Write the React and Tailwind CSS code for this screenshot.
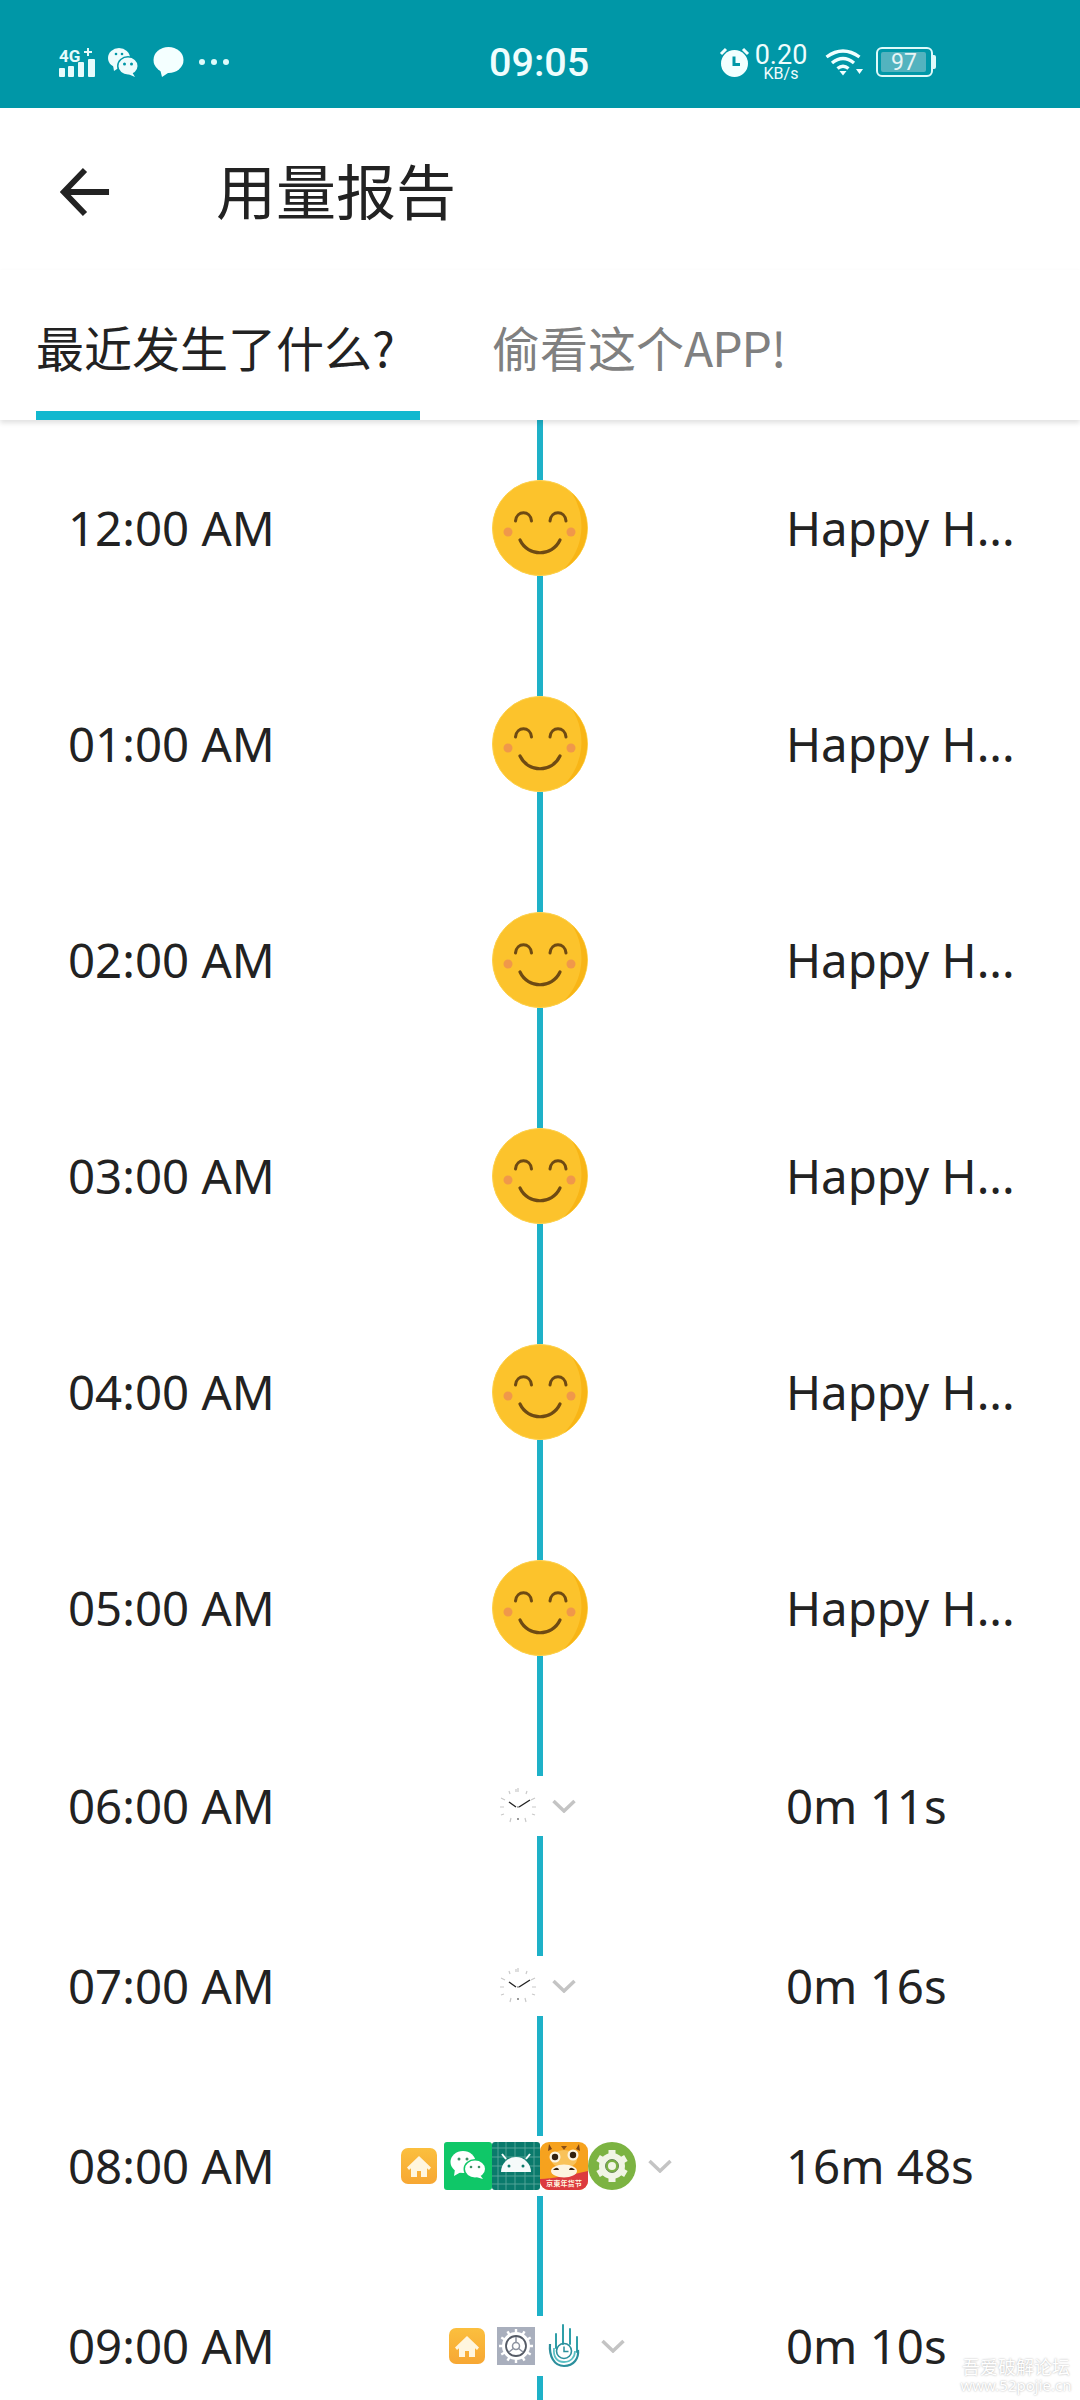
const cjk = { fontFamily: '"Noto Sans CJK SC", sans-serif' };
const noto = { fontFamily: '"Noto Sans", sans-serif' };

function Signal() {
  return (
    <svg width="37" height="30" viewBox="0 0 37 30" fill="#e6fbfb">
      <text x="0" y="15" fontSize="17" fontWeight="700" fontFamily="Roboto, sans-serif">4G</text>
      <path d="M28 1h2v3h3v2h-3v3h-2V6h-3V4h3z" />
      <rect x="0" y="21" width="6" height="9" rx="1" />
      <rect x="9" y="19" width="6" height="11" rx="1" />
      <rect x="19" y="15" width="6" height="15" rx="1" />
      <rect x="29" y="12" width="7" height="18" rx="1" />
    </svg>
  );
}
function WeChatStatus() {
  return (
    <svg width="31" height="30" viewBox="0 0 31 30">
      <ellipse cx="11" cy="11" rx="11" ry="10" fill="#eefcfc" />
      <path d="M5 18l1 6 6-4z" fill="#eefcfc" />
      <ellipse cx="20" cy="19" rx="11" ry="10" fill="#0097a7" />
      <ellipse cx="20" cy="19" rx="9.5" ry="8.5" fill="#eefcfc" />
      <path d="M24 25l3 5-7-3z" fill="#eefcfc" />
      <circle cx="8" cy="7" r="1.3" fill="#0097a7" /><circle cx="14" cy="7" r="1.3" fill="#0097a7" />
      <circle cx="16.5" cy="17" r="1.5" fill="#0097a7" /><circle cx="23.5" cy="17" r="1.5" fill="#0097a7" />
    </svg>
  );
}
function Bubble() {
  return (
    <svg width="31" height="30" viewBox="0 0 31 30" fill="#f4ffff">
      <ellipse cx="15.5" cy="13" rx="15" ry="13" />
      <path d="M7 22l2 8 9-6z" />
    </svg>
  );
}
function Alarm() {
  return (
    <svg width="31" height="30" viewBox="0 0 31 30">
      <circle cx="15.5" cy="16.5" r="13.5" fill="#f2ffff" />
      <path d="M2 7l5-5M29 7l-5-5" stroke="#f2ffff" strokeWidth="3" fill="none" />
      <path d="M15 9.5v8h6" stroke="#0097a7" strokeWidth="3" fill="none" />
    </svg>
  );
}
function Wifi() {
  return (
    <svg width="38" height="28" viewBox="0 0 38 28" fill="none" stroke="#f0ffff" strokeWidth="3.4">
      <path d="M1.5 9Q18 -3 34.5 9" />
      <path d="M7 15Q18 6 29 15" />
      <path d="M12.5 20.5Q18 16 23.5 20.5" />
      <path d="M14.5 23l3.5 4.5 3.5-4.5z" fill="#f0ffff" stroke="none" />
      <path d="M31 21h7l-3.500 5z" fill="#f0ffff" stroke="none" />
    </svg>
  );
}
function Battery() {
  return (
    <div className="flex items-center">
      <div className="flex h-[30px] w-[57px] items-center rounded-[6px] border-2 border-[#dffafa] p-[3px]">
        <div className="flex h-full w-[45px] items-center justify-center rounded-[2px] bg-[#53b3bf] pl-[1px] text-[23px] leading-none text-[#e8f5f5]" style={{ fontFamily: 'Roboto, sans-serif' }}>97</div>
      </div>
      <div className="h-[14px] w-[3px] rounded-r-[2px] bg-[#dffafa]" />
    </div>
  );
}

function StatusBar() {
  return (
    <div className="flex h-[108px] items-center bg-[#0097a7] pt-[16px] text-[#effdfd]" style={{ fontFamily: 'Roboto, sans-serif' }}>
      <div className="flex w-[489px] items-center pl-[59px]">
        <Signal />
        <div className="ml-[12px]"><WeChatStatus /></div>
        <div className="ml-[14px]"><Bubble /></div>
        <div className="ml-[15px] flex gap-[6px]">
          <span className="h-[6px] w-[6px] rounded-full bg-[#dffafa]" />
          <span className="h-[6px] w-[6px] rounded-full bg-[#dffafa]" />
          <span className="h-[6px] w-[6px] rounded-full bg-[#dffafa]" />
        </div>
      </div>
      <div className="w-[230px] pt-[2px] text-[39.500px] leading-none font-medium">09:05</div>
      <Alarm />
      <div className="ml-[4px] flex w-[54px] flex-col items-center leading-none">
        <span className="text-[27px] leading-[20px]">0.20</span>
        <span className="mt-[3px] text-[16px] leading-[12px]">KB/s</span>
      </div>
      <div className="ml-[17px]"><Wifi /></div>
      <div className="ml-[13px]"><Battery /></div>
    </div>
  );
}

function Header() {
  return (
    <div className="flex h-[162px] items-center pt-[6px]">
      <svg className="ml-[60px]" width="50" height="50" viewBox="0 0 52 50" fill="none" stroke="#222222" strokeWidth="6">
        <path d="M26 2L4 25l22 23" />
        <path d="M5 25h46" />
      </svg>
      <div className="ml-[106px] pb-[6px] text-[60px] leading-none text-[#222222]" style={cjk}>用量报告</div>
    </div>
  );
}

function Tabs() {
  return (
    <div className="relative z-20 h-[150px] bg-white shadow-[0_3px_5px_rgba(0,0,0,0.12)]">
      <div className="flex h-[141px] items-center pb-[2px] pt-[12px] text-[48px] leading-none" style={cjk}>
        <div className="ml-[36px] w-[384px] text-[#222222]">最近发生了什么?</div>
        <div className="ml-[72px] text-[#808080]">偷看这个<span className="tracking-[-1px]">APP!</span></div>
      </div>
      <div className="ml-[36px] h-[9px] w-[384px] bg-[#12b8cf]" />
    </div>
  );
}

function Smiley() {
  return (
    <svg width="96" height="96" viewBox="0 0 96 96">
      <circle cx="48" cy="48" r="47.500" fill="#fcc32c" stroke="#fdd04a" strokeWidth="1" />
      <path d="M80 13A48 48 0 0 1 72 89A62 62 0 0 0 80 13z" fill="#f8b516" />
      <circle cx="16" cy="52" r="4.500" fill="#f0984a" />
      <circle cx="79" cy="52" r="4.500" fill="#f0984a" />
      <g fill="none" stroke="#6e4a13" strokeLinecap="round">
        <path d="M23.500 41c1-11 15-11 16 0" strokeWidth="3" />
        <path d="M58 41c1-11 15-11 16 0" strokeWidth="3" />
        <path d="M28 60c8 17 32 17 40 0" strokeWidth="3.200" />
      </g>
    </svg>
  );
}

function Clock() {
  return (
    <svg width="40" height="40" viewBox="0 0 40 40">
      <circle cx="20" cy="20" r="20" fill="#ffffff" />
      <g stroke="#c9c9c9" strokeWidth="1.200">
        <path d="M20 2v4M18 6v-3M2 21h4M34 21h4M11 5l1 3M29 5l-1 3M3 12l4 2M37 12l-4 2M3 29l3-1M37 29l-3-1M12 36l1-4M28 36l-1-4" />
      </g>
      <path d="M18 21l-7-5" stroke="#222222" strokeWidth="1.400" />
      <path d="M21 21l11-7" stroke="#222222" strokeWidth="1.400" />
      <circle cx="20" cy="33" r="1" fill="#777777" />
      <circle cx="20" cy="21" r="1" fill="#999999" />
    </svg>
  );
}

function HomeIcon() {
  return (
    <svg width="36" height="36" viewBox="0 0 36 36">
      <defs>
        <linearGradient id="homeg" x1="0" y1="0" x2="0" y2="1">
          <stop offset="0" stopColor="#fbbf3e" />
          <stop offset="1" stopColor="#f7a733" />
        </linearGradient>
      </defs>
      <rect width="36" height="36" rx="7" fill="url(#homeg)" />
      <path d="M18 8L6 19.500l2 2.500 2-1.800V29h6v-6h4v6h6v-8.800l2 1.800 2-2.500z" fill="#fff6df" />
    </svg>
  );
}

function WeChatApp() {
  return (
    <svg width="48" height="48" viewBox="0 0 48 48">
      <rect width="48" height="48" rx="3" fill="#0fc768" />
      <ellipse cx="19" cy="20" rx="12.500" ry="11" fill="#ffffff" />
      <path d="M11 27l-1 7 7-4z" fill="#ffffff" />
      <ellipse cx="31" cy="27" rx="11.500" ry="10" fill="#0fc768" />
      <ellipse cx="31" cy="27" rx="10" ry="8.500" fill="#ffffff" />
      <path d="M36 33l3 4-7-2z" fill="#ffffff" />
      <circle cx="15" cy="17" r="1.500" fill="#3e8f65" />
      <circle cx="23" cy="17" r="1.500" fill="#3e8f65" />
      <circle cx="27" cy="25" r="1.300" fill="#3e8f65" />
      <circle cx="35" cy="25" r="1.300" fill="#3e8f65" />
    </svg>
  );
}

function AndroidApp() {
  return (
    <svg width="48" height="48" viewBox="0 0 48 48">
      <rect width="48" height="48" rx="3" fill="#0a7a6c" />
      <path d="M6 0v48M14 0v48M23 0v48M33 0v48M42 0v48M0 6h48M0 15h48M0 24h48M0 34h48M0 42h48" stroke="#5aa79c" strokeWidth="0.900" />
      <path d="M9 30a15 15 0 0 1 30 0z" fill="#f5fafa" />
      <path d="M14 17l-4-5M34 17l4-5" stroke="#f5fafa" strokeWidth="2" />
      <circle cx="17" cy="24" r="1.500" fill="#0a7a6c" />
      <circle cx="31" cy="24" r="1.500" fill="#0a7a6c" />
    </svg>
  );
}

function TigerApp() {
  return (
    <svg width="48" height="48" viewBox="0 0 48 48">
      <rect width="48" height="48" rx="9" fill="#f6a21e" />
      <path d="M0 37C12 37 30 33 48 29v10a9 9 0 0 1-9 9H9a9 9 0 0 1-9-9z" fill="#dc3b3f" />
      <path d="M9 2l3 5-4 2zM39 2l-3 5 4 2z" fill="#7c4415" />
      <path d="M21 4l3 4 3-4z" fill="#8a5016" />
      <ellipse cx="24" cy="17" rx="13" ry="9" fill="#f9c25a" />
      <circle cx="15" cy="15" r="5.500" fill="#fdf4e0" />
      <circle cx="33" cy="13" r="5.500" fill="#fdf4e0" />
      <circle cx="15" cy="15" r="3.200" fill="#33210f" />
      <circle cx="33" cy="13" r="3.200" fill="#33210f" />
      <ellipse cx="24" cy="29" rx="13" ry="6.500" fill="#fdf4e0" />
      <path d="M13 28c3-3 5-3 6 0M29 28c1-3 3-3 6 0" fill="#33210f" />
      <text x="24" y="44" fontSize="7.200" fill="#fff6e0" textAnchor="middle" fontWeight="700" fontFamily="'Noto Sans CJK SC', sans-serif">京東年货节</text>
    </svg>
  );
}

function GearApp() {
  return (
    <svg width="48" height="48" viewBox="0 0 48 48">
      <circle cx="24" cy="24" r="24" fill="#7cb342" />
      <g fill="#f1f5e5">
        <circle cx="24" cy="24" r="13" />
        <g stroke="#f1f5e5" strokeWidth="7">
          <path d="M24 8v32M10.100 16l27.800 16M10.100 32l27.800-16" />
        </g>
      </g>
      <circle cx="24" cy="24" r="6.500" fill="#7cb342" stroke="#6a8a58" strokeWidth="1" />
      <circle cx="24" cy="24" r="4" fill="#f1f5e5" />
    </svg>
  );
}

function SettingsApp() {
  const teeth = [0, 30, 60, 90, 120, 150];
  return (
    <svg width="38" height="38" viewBox="0 0 38 38">
      <rect width="38" height="38" fill="#a9afbd" />
      <circle cx="19" cy="19" r="14" fill="#ffffff" />
      <g stroke="#ffffff" strokeWidth="2.400">
        {teeth.map((a) => (
          <path key={a} d="M19 2v34" transform={`rotate(${a} 19 19)`} />
        ))}
      </g>
      <circle cx="19" cy="19" r="10" fill="#ffffff" stroke="#555b66" strokeWidth="1.800" />
      <path d="M19 10v5M12 25l5-4M26 25l-5-4" stroke="#8d93a0" strokeWidth="1.500" />
      <circle cx="19" cy="19" r="3.500" fill="none" stroke="#8d93a0" strokeWidth="1.500" />
    </svg>
  );
}

function HandApp() {
  return (
    <svg width="32" height="44" viewBox="0 0 32 44" fill="none" stroke="#2f9fa8" strokeWidth="2">
      <path d="M8 24V10M15 20V1M22 20V5M29 28V13" strokeLinecap="round" />
      <path d="M2 20c-1 12 4 22 14 22s15-8 14-16" stroke="#2b8f9c" strokeWidth="2.200" />
      <path d="M6 24c-1 9 3 14 10 14s11-5 11-11" stroke="#5cc0c4" strokeWidth="1.800" />
      <circle cx="16" cy="27" r="7.500" stroke="#2b8f9c" strokeWidth="1.600" />
      <path d="M16 22.500V27.500h4.500" stroke="#2b8f9c" strokeWidth="1.500" />
    </svg>
  );
}

function Chevron({ cls }) {
  return (
    <svg className={cls} width="24" height="14" viewBox="0 0 24 14" fill="none" stroke="#c4c4c4" strokeWidth="3.500">
      <path d="M1.500 2L12 12 22.500 2" />
    </svg>
  );
}

function Row({ time, right, tall, children }) {
  return (
    <div className={`grid grid-cols-[293px_1fr_293px] items-center text-[47.4px] leading-none text-[#222222] ${tall ? 'h-[216px]' : 'h-[180px]'}`} style={noto}>
      <div className="pl-[68px]">{time}</div>
      <div className="flex justify-center">{children}</div>
      <div className="-ml-[1px] whitespace-nowrap">{right}</div>
    </div>
  );
}

function AppGroup({ children, chevronGap, pad }) {
  return (
    <div className={`relative z-10 flex h-[60px] items-center bg-white ${pad}`}>
      {children}
      <Chevron cls={chevronGap} />
    </div>
  );
}

const happyRows = ['12:00 AM', '01:00 AM', '02:00 AM', '03:00 AM', '04:00 AM', '05:00 AM'];

export default function App() {
  return (
    <div className="h-[2400px] w-[1080px] overflow-hidden bg-white">
      <StatusBar />
      <Header />
      <Tabs />
      <div className="relative">
        <div className="absolute inset-y-0 left-[537px] w-[6px] bg-[#1eb1c8]" />
        {happyRows.map((t) => (
          <Row key={t} time={t} right="Happy H..." tall>
            <div className="relative z-10 rounded-full bg-white"><Smiley /></div>
          </Row>
        ))}
        <Row time="06:00 AM" right="0m 11s">
          <AppGroup chevronGap="ml-[14px]" pad="pr-[6px]"><Clock /></AppGroup>
        </Row>
        <Row time="07:00 AM" right="0m 16s">
          <AppGroup chevronGap="ml-[14px]" pad="pr-[6px]"><Clock /></AppGroup>
        </Row>
        <Row time="08:00 AM" right="16m 48s">
          <AppGroup chevronGap="ml-[12px]" pad="pr-[8px]">
            <div className="mr-[7px]"><HomeIcon /></div>
            <WeChatApp />
            <AndroidApp />
            <TigerApp />
            <GearApp />
          </AppGroup>
        </Row>
        <Row time="09:00 AM" right="0m 10s">
          <AppGroup chevronGap="ml-[21px]" pad="pr-[6px]">
            <HomeIcon />
            <div className="ml-[12px]"><SettingsApp /></div>
            <div className="ml-[13px]"><HandApp /></div>
          </AppGroup>
        </Row>
        <div className="absolute right-[8px] top-[1935px] z-20 flex w-[112px] flex-col items-center text-white [text-shadow:0_0_2px_rgba(0,0,0,0.35)]">
          <span className="text-[18px] leading-[22px]" style={cjk}>吾爱破解论坛</span>
          <span className="text-[15px] leading-[16px]" style={noto}>www.52pojie.cn</span>
        </div>
      </div>
    </div>
  );
}
